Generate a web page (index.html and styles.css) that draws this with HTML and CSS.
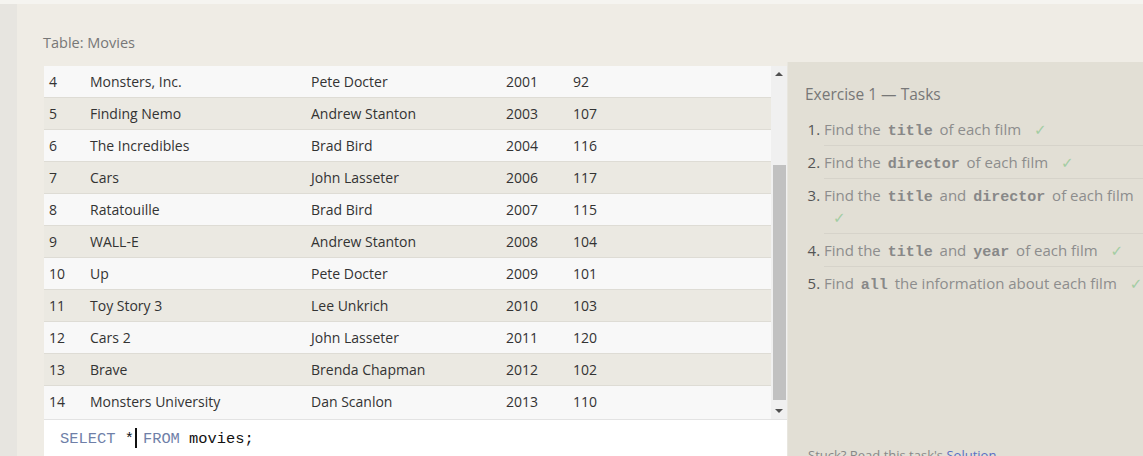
FILE: index.html
```html
<!DOCTYPE html>
<html>
<head>
<meta charset="utf-8">
<link rel="stylesheet" href="styles.css">
</head>
<body>
<div class="topstrip"></div>
<div class="page">
  <div class="gutter"></div>
  <div class="main">
    <div class="table-title">Table: Movies</div>
    <div class="workspace">
      <div class="left">
        <div class="results">
          <div class="rows">
            <div class="row"><span class="c-id">4</span><span class="c-title">Monsters, Inc.</span><span class="c-dir">Pete Docter</span><span class="c-year">2001</span><span class="c-len">92</span></div>
            <div class="row"><span class="c-id">5</span><span class="c-title">Finding Nemo</span><span class="c-dir">Andrew Stanton</span><span class="c-year">2003</span><span class="c-len">107</span></div>
            <div class="row"><span class="c-id">6</span><span class="c-title">The Incredibles</span><span class="c-dir">Brad Bird</span><span class="c-year">2004</span><span class="c-len">116</span></div>
            <div class="row"><span class="c-id">7</span><span class="c-title">Cars</span><span class="c-dir">John Lasseter</span><span class="c-year">2006</span><span class="c-len">117</span></div>
            <div class="row"><span class="c-id">8</span><span class="c-title">Ratatouille</span><span class="c-dir">Brad Bird</span><span class="c-year">2007</span><span class="c-len">115</span></div>
            <div class="row"><span class="c-id">9</span><span class="c-title">WALL-E</span><span class="c-dir">Andrew Stanton</span><span class="c-year">2008</span><span class="c-len">104</span></div>
            <div class="row"><span class="c-id">10</span><span class="c-title">Up</span><span class="c-dir">Pete Docter</span><span class="c-year">2009</span><span class="c-len">101</span></div>
            <div class="row"><span class="c-id">11</span><span class="c-title">Toy Story 3</span><span class="c-dir">Lee Unkrich</span><span class="c-year">2010</span><span class="c-len">103</span></div>
            <div class="row"><span class="c-id">12</span><span class="c-title">Cars 2</span><span class="c-dir">John Lasseter</span><span class="c-year">2011</span><span class="c-len">120</span></div>
            <div class="row"><span class="c-id">13</span><span class="c-title">Brave</span><span class="c-dir">Brenda Chapman</span><span class="c-year">2012</span><span class="c-len">102</span></div>
            <div class="row"><span class="c-id">14</span><span class="c-title">Monsters University</span><span class="c-dir">Dan Scanlon</span><span class="c-year">2013</span><span class="c-len">110</span></div>
          </div>
          <div class="scrollbar">
            <div class="arrow up"></div>
            <div class="track"><div class="thumb"></div></div>
            <div class="arrow down"></div>
          </div>
        </div>
        <div class="editor"><span class="kw">SELECT</span> *<span class="cursor"></span><span class="kw">FROM</span> movies;</div>
      </div>
      <div class="right">
        <div class="ex-title">Exercise 1 — Tasks</div>
        <ol class="tasks">
          <li>Find the <code>title</code> of each film <span class="check">✓</span></li>
          <li>Find the <code>director</code> of each film <span class="check">✓</span></li>
          <li>Find the <code>title</code> and <code>director</code> of each film <span class="check">✓</span></li>
          <li>Find the <code>title</code> and <code>year</code> of each film <span class="check">✓</span></li>
          <li>Find <code>all</code> the information about each film <span class="check">✓</span></li>
        </ol>
        <div class="stuck">Stuck? Read this task's <span class="link">Solution</span></div>
      </div>
    </div>
  </div>
</div>
</body>
</html>
```

FILE: styles.css
```css
html, body {
  margin: 0;
  padding: 0;
  overflow: hidden;
}
body {
  width: 1143px;
  height: 456px;
  background: #e7e5e0;
  font-family: "Open Sans", "Noto Sans", sans-serif;
  color: #444;
}
.topstrip {
  height: 4px;
  background: #f5f4f0;
}
.page {
  display: flex;
  height: 452px;
  overflow: hidden;
}
.gutter {
  width: 17px;
  flex: none;
  background: #e7e5e0;
}
.main {
  flex: 1;
  background: #efece5;
  padding-left: 26px;
  min-width: 0;
}
.table-title {
  font-size: 14.5px;
  color: #777;
  padding-top: 29px;
  line-height: 20px;
  height: 29px;
}
.workspace {
  display: flex;
  align-items: flex-start;
}
.left {
  width: 743px;
  flex: none;
  margin-top: 4px;
  padding-left: 1px;
}
.results {
  display: flex;
  height: 353px;
  background: #f8f8f8;
}
.rows {
  flex: 1;
}
.row {
  display: flex;
  height: 31px;
  line-height: 31px;
  font-size: 14px;
  color: #333;
  border-bottom: 1px solid #dedcd5;
  background: #f8f8f8;
}
.row:nth-child(even) {
  background: #ebe9e2;
}
.row:last-child {
  border-bottom: none;
}
.c-id { width: 46px; padding-left: 5px; box-sizing: border-box; }
.c-title { width: 221px; }
.c-dir { width: 195px; }
.c-year { width: 67px; }
.c-len { width: 60px; }

.scrollbar {
  width: 16px;
  display: flex;
  flex-direction: column;
  background: #f0f0f0;
}
.arrow {
  height: 16px;
  position: relative;
}
.arrow::after {
  content: "";
  position: absolute;
  left: 4px;
  top: 6px;
  border-left: 4px solid transparent;
  border-right: 4px solid transparent;
}
.arrow.up::after { border-bottom: 4px solid #505050; }
.arrow.down::after { border-top: 4px solid #505050; }
.track {
  flex: 1;
  padding-top: 83px;
  padding-bottom: 3px;
  display: flex;
}
.thumb {
  flex: 1;
  margin: 0 1px 0 2px;
  background: #c1c1c1;
}
.editor {
  background: #fff;
  height: 60px;
  padding-left: 16px;
  padding-top: 8px;
  box-sizing: border-box;
  font-family: "Liberation Mono", "DejaVu Sans Mono", monospace;
  font-size: 15.4px;
  color: #111;
  line-height: 20px;
  border-top: 1px solid #e3e3e3;
}
.kw { color: #6f7fa8; }
.cursor {
  display: inline-block;
  width: 2px;
  height: 20px;
  background: #111;
  vertical-align: -5px;
  margin-right: 6px;
  margin-left: 1px;
}
.right {
  width: 400px;
  flex: none;
  height: 394px;
  overflow: hidden;
  background: #e2dfd5;
  padding-left: 17px;
  border-left: 1px solid #e8e6df;
  box-sizing: border-box;
  color: #888;
}
.ex-title {
  font-size: 15.5px;
  color: #777;
  padding-top: 21px;
  line-height: 22px;
}
.tasks {
  margin: 8px 0 0 0;
  padding: 0 0 0 19px;
  width: 324px;
  font-size: 15px;
  color: #8d8d8d;
}
.tasks li {
  line-height: 22px;
  padding: 5px 0;
  border-bottom: 1px solid #d6d3ca;
}
.tasks li:last-child { border-bottom: none; }
.tasks li::marker { color: #555; }
.tasks code {
  font-family: "Liberation Mono", "DejaVu Sans Mono", monospace;
  font-weight: bold;
  font-size: 15px;
  line-height: 1;
  color: #888;
  padding: 0 3px;
}
.check {
  font-family: "DejaVu Sans", sans-serif;
  font-size: 15px;
  line-height: 1;
  color: #a3cda3;
  margin-left: 7px;
  padding-left: 2px;
}
.stuck {
  margin-top: 147px;
  padding-left: 3px;
  font-size: 13px;
  line-height: 18px;
  color: #888;
}
.link { color: #5a6fc4; }
```
